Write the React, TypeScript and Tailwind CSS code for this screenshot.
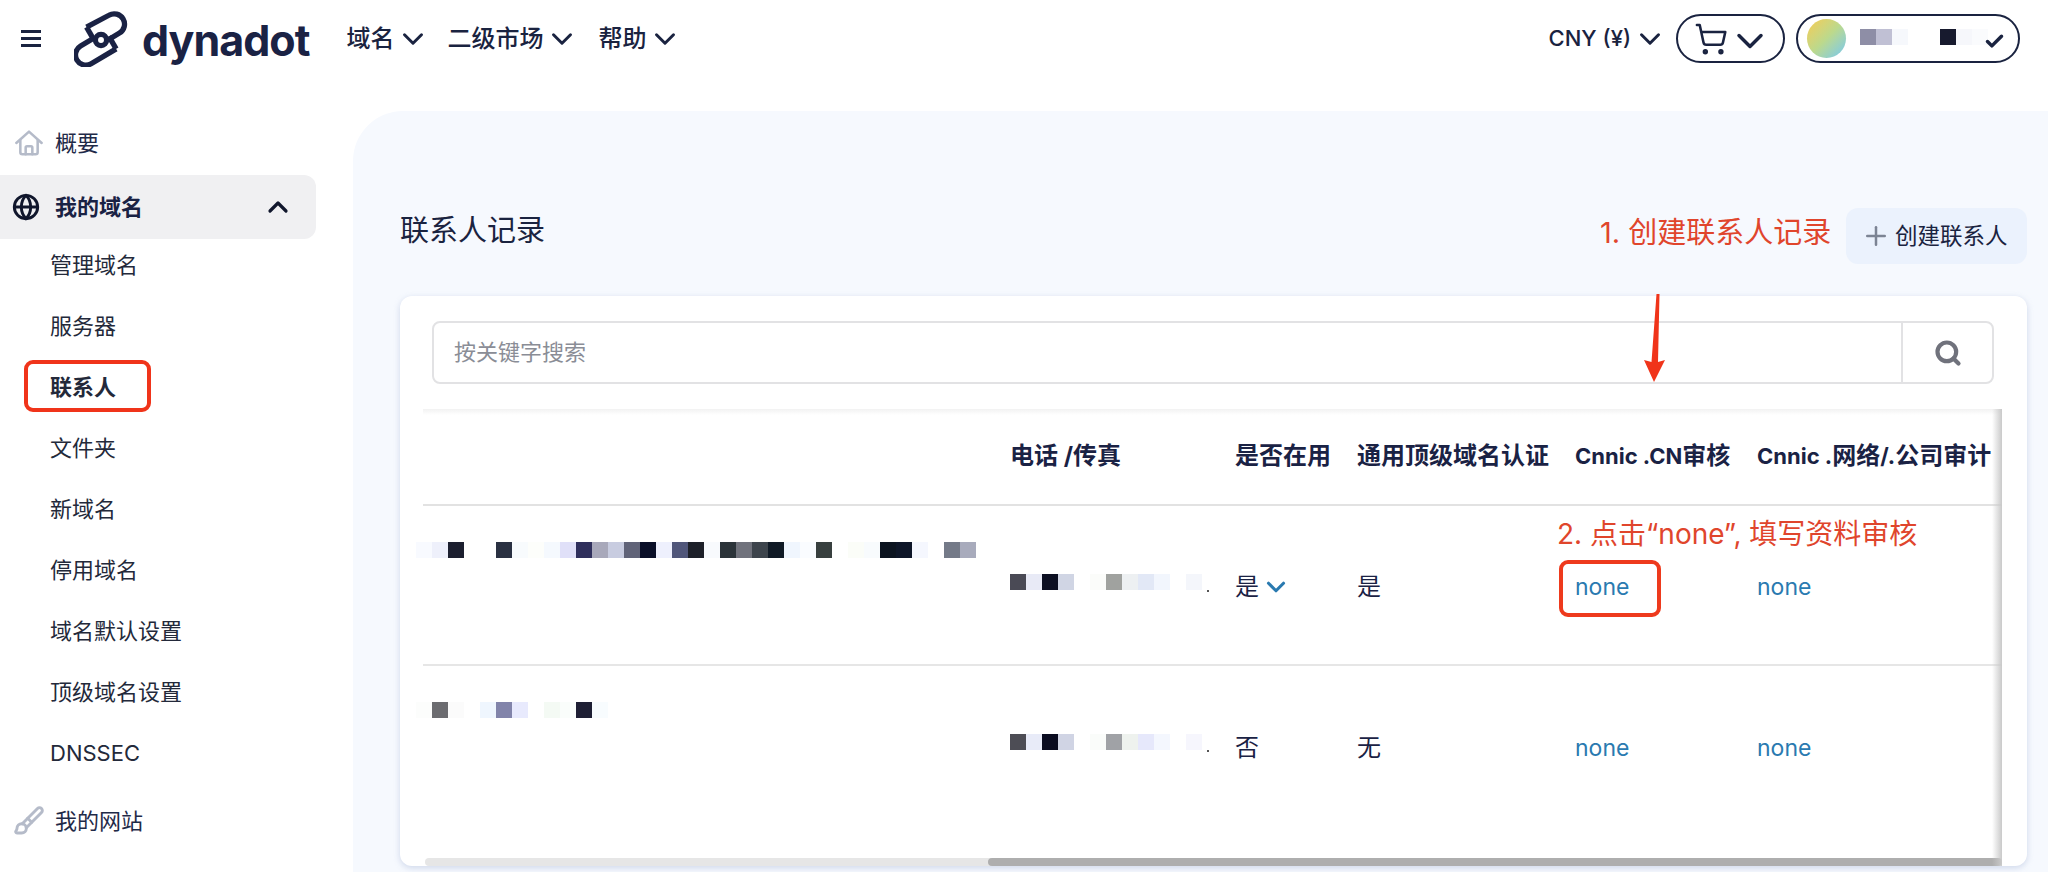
import { Brush, Check, ChevronDown, ChevronUp, Globe, Plus, Search, ShoppingCart } from "lucide-react";

const FONT = "font-['Inter','Noto_Sans_CJK_SC',sans-serif]";

const nameRow1 = [
  "#f8faff", "#eef0fb", "#1c1f2f", "#fff", "#fff", "#2a3142", "#f8fbfd", "#fdfefb", "#f5f9fe", "#e0e0f8",
  "#2f2f5c", "#a8a8ba", "#c8cce0", "#606378", "#0a0f28", "#eef0fd", "#50567a", "#1d2029", "#f8fafd", "#2b3339",
  "#70727c", "#3d444c", "#101a26", "#f0f6fe", "#fafcff", "#38403f", "#fff", "#fbfdf8", "#f8fbfd", "#0c1420",
  "#0e1628", "#f5f7fe", "#fff", "#747a88", "#a8abbc",
];
const nameRow2 = ["#fcfdfc", "#6c6c70", "#fbfbfb", "#fff", "#eff6fe", "#8284aa", "#e8eafd", "#fff", "#f4faf4", "#fafdfb", "#1e1f34", "#f8fcfe"];
const phoneRow1 = ["#4a4a55", "#e8eaf6", "#0c0f22", "#d0d5e4", "#fff", "#fbfcfa", "#a0a29f", "#edf0f2", "#e2e8f6", "#f2f6fd", "#fff", "#f4f6fb"];
const phoneRow2 = ["#4d4d55", "#e8ebf8", "#0a0c20", "#d0d4e4", "#fff", "#fafcfa", "#a0a2a6", "#eef2ee", "#e6e8fb", "#f4f7fe", "#fff", "#f6f6fd"];
const accountBits = ["#8e8ea6", "#c0c0d4", "#f6f8fc", "#fff", "#fff", "#171a2e", "#f6f7fb", "#fafbfd"];

const subItems = ["管理域名", "服务器", "联系人", "文件夹", "新域名", "停用域名", "域名默认设置", "顶级域名设置", "DNSSEC"];

const COLS = "grid grid-cols-[587px_225px_122px_218px_182px_245px]";

function Mosaic({ cells, className }: { cells: string[]; className?: string }) {
  return (
    <div className={`flex h-4 shrink-0 ${className ?? ""}`}>
      {cells.map((c, i) => (
        <span key={i} className="h-4 w-4 shrink-0" style={{ backgroundColor: c }} />
      ))}
    </div>
  );
}

function Logo() {
  return (
    <svg className="ml-[33px] h-[56px] w-[56px] shrink-0" viewBox="40 15 170 170" fill="none" stroke="#1a2244" strokeWidth="16" strokeLinejoin="round">
      <path d="M78 64L146 28A31 31 0 0 1 178 82L142 104" />
      <path d="M78 64L100 102" />
      <path d="M168 130L92 175A31 31 0 0 1 60 121L102 96" />
      <path d="M168 130L146 92" />
      <circle cx="122" cy="103" r="17" />
    </svg>
  );
}

function HomeIcon() {
  return (
    <svg className="h-[32px] w-[32px] shrink-0" viewBox="0 0 24 24" fill="none" stroke="#b5bbc9" strokeWidth="1.9" strokeLinecap="round" strokeLinejoin="round">
      <path d="M2.5 12L12 3.5L21.5 12" />
      <path d="M5.5 10v9a1.5 1.5 0 0 0 1.5 1.5h10a1.5 1.5 0 0 0 1.5-1.5v-9" />
      <path d="M9.5 20.5v-5a1 1 0 0 1 1-1h3a1 1 0 0 1 1 1v5" />
    </svg>
  );
}

function NavLink({ label, className }: { label: string; className?: string }) {
  return (
    <div className={`flex items-center gap-[2px] text-[24px] font-medium text-[#1a2340] ${className ?? ""}`}>
      <span>{label}</span>
      <ChevronDown className="h-[34px] w-[34px]" strokeWidth={2.1} />
    </div>
  );
}

function Header() {
  return (
    <header className="flex h-[111px] shrink-0 items-start pt-[11px]">
      <div className="flex w-[20px] ml-[21px] mt-[19px] flex-col gap-[4px]">
        <span className="h-[3px] w-[20px] bg-[#1a2340]" />
        <span className="h-[3px] w-[20px] bg-[#1a2340]" />
        <span className="h-[3px] w-[20px] bg-[#1a2340]" />
      </div>
      <Logo />
      <span className="ml-[12px] mt-[4px] text-[43px] leading-[50px] font-bold tracking-[-1px] text-[#1a2244]">dynadot</span>
      <div className="ml-[37px] mt-[10px] flex items-center">
        <NavLink label="域名" />
        <NavLink label="二级市场" className="ml-[17px]" />
        <NavLink label="帮助" className="ml-[19px]" />
      </div>
      <div className="ml-auto mr-[28px] mt-[3px] flex items-center">
        <div className="flex items-center gap-[2px] text-[22px] font-medium text-[#1a2340]">
          <span>CNY (¥)</span>
          <ChevronDown className="h-[34px] w-[34px]" strokeWidth={2.1} />
        </div>
        <div className="ml-[9px] flex h-[49px] w-[109px] items-center rounded-full border-2 border-[#1a2340] pl-[16px]">
          <ShoppingCart className="h-[34px] w-[34px] shrink-0 text-[#1a2340]" strokeWidth={1.8} />
          <ChevronDown className="mt-[4px] h-[44px] w-[44px] shrink-0 text-[#1a2340]" strokeWidth={1.9} />
        </div>
        <div className="ml-[11px] flex h-[49px] w-[224px] items-center rounded-full border-2 border-[#1a2340] pl-[9px]">
          <span className="h-[39px] w-[39px] shrink-0 rounded-full bg-gradient-to-br from-[#f5cb4e] via-[#bcd98c] to-[#74c6ee]" />
          <Mosaic cells={accountBits} className="ml-[14px] -mt-[3px]" />
          <Check className="ml-[-4px] mt-[6px] h-[21px] w-[21px] shrink-0 text-[#1a2340]" strokeWidth={4} />
        </div>
      </div>
    </header>
  );
}

function Sidebar() {
  return (
    <aside className="w-[353px] shrink-0">
      <div className="flex h-[64px] items-center gap-[10px] pl-[13px] text-[22px] text-[#1f2a48]">
        <HomeIcon />
        <span>概要</span>
      </div>
      <div className="relative z-10 flex h-[64px] w-[316px] items-center rounded-r-xl bg-[#f0f0f2] pl-[12px] text-[22px] font-bold text-[#1a2244]">
        <Globe className="h-[28px] w-[28px] text-[#10162c]" strokeWidth={2.5} />
        <span className="ml-[15px]">我的域名</span>
        <ChevronUp className="ml-auto mr-[22px] h-[32px] w-[32px] text-[#10162c]" strokeWidth={2.4} />
      </div>
      <ul className="-mt-[4px]">
        {subItems.map((s) => (
          <li key={s} className={`relative z-20 flex h-[61px] items-center pl-[50px] text-[22px] text-[#23293a] ${s === "联系人" ? "font-bold" : ""}`}>
            {s}
          </li>
        ))}
      </ul>
      <div className="flex h-[74px] items-center gap-[10px] pl-[13px] text-[22px] text-[#1f2a48]">
        <Brush className="h-[32px] w-[32px] text-[#b5bbc9]" strokeWidth={2.2} />
        <span>我的网站</span>
      </div>
    </aside>
  );
}

function NoneLink() {
  return <span className="text-[23px] leading-[36px] text-[#2a7ab0]">none</span>;
}

function ContactTable() {
  return (
    <div className="relative ml-[23px] mt-[25px] flex w-[1579px] flex-1 flex-col">
      <div className="h-[6px] bg-gradient-to-b from-[#f2f2f2] to-white" />
      <div className={`${COLS} h-[91px] items-start border-b-2 border-[#e2e2e2] pt-[23px] text-[24px] leading-[36px] font-bold text-[#1a2244]`}>
        <span />
        <span>电话 /传真</span>
        <span>是否在用</span>
        <span className="whitespace-nowrap">通用顶级域名认证</span>
        <span className="whitespace-nowrap"><span className="text-[22px]">Cnnic .CN</span>审核</span>
        <span className="whitespace-nowrap"><span className="text-[22px]">Cnnic .</span>网络<span className="text-[22px]">/.</span>公司审计</span>
      </div>
      <div className={`${COLS} h-[160px] border-b-2 border-[#e6e6e6] text-[24px] leading-[36px] text-[#1a2244]`}>
        <Mosaic cells={nameRow1} className="ml-[-7px] mt-[36px]" />
        <div className="flex pt-[68px]">
          <Mosaic cells={phoneRow1} />
          <span className="ml-[5px] mt-[16px] h-[2px] w-[2px] bg-[#555]" />
        </div>
        <div className="flex h-[99px] items-center self-start pt-[63px]">
          <span>是</span>
          <ChevronDown className="ml-[2px] h-[30px] w-[30px] text-[#2a7ab0]" strokeWidth={2.5} />
        </div>
        <span className="pt-[63px]">是</span>
        <span className="pt-[63px]"><NoneLink /></span>
        <span className="pt-[63px]"><NoneLink /></span>
      </div>
      <div className={`${COLS} flex-1 text-[24px] leading-[36px] text-[#1a2244]`}>
        <Mosaic cells={nameRow2} className="ml-[-7px] mt-[36px]" />
        <div className="flex pt-[68px]">
          <Mosaic cells={phoneRow2} />
          <span className="ml-[5px] mt-[16px] h-[2px] w-[2px] bg-[#555]" />
        </div>
        <span className="pt-[64px]">否</span>
        <span className="pt-[64px]">无</span>
        <span className="pt-[64px]"><NoneLink /></span>
        <span className="pt-[64px]"><NoneLink /></span>
      </div>
      <div className="ml-[2px] flex h-[8px] shrink-0 rounded-full bg-[#e6e6e6]">
        <div className="ml-[563px] flex-1 rounded-full bg-[#aeaeae]" />
      </div>
      <div className="pointer-events-none absolute bottom-0 right-0 top-0 w-[10px] bg-gradient-to-r from-transparent to-[#c9c9c9]" />
    </div>
  );
}

export default function App() {
  return (
    <div className={`relative flex h-[872px] w-[2048px] flex-col overflow-hidden bg-white ${FONT}`}>
      <Header />
      <div className="flex min-h-0 flex-1">
        <Sidebar />
        <main className="flex flex-1 flex-col rounded-tl-[50px] bg-[#f6f9fe] pl-[47px] pr-[21px] pt-[97px]">
          <div className="flex h-[56px] items-center justify-between">
            <h1 className="-mt-[10px] text-[29px] font-normal text-[#1a2340]">联系人记录</h1>
            <button className="flex h-[56px] w-[181px] items-center rounded-xl bg-[#ebf2fd] pl-[15px] text-[22.5px] text-[#1a2340]">
              <Plus className="h-[30px] w-[30px] text-[#7c8494]" strokeWidth={2} />
              <span className="ml-[4px]">创建联系人</span>
            </button>
          </div>
          <div className="mt-[32px] flex h-[570px] flex-col overflow-hidden rounded-xl bg-white pt-[25px] shadow-[0_2px_6px_rgba(160,175,210,0.45)]">
            <div className="ml-[32px] flex h-[63px] w-[1562px] shrink-0 items-center rounded-lg border-2 border-[#e2e2e4]">
              <span className="flex-1 pl-[20px] text-[22px] text-[#8a8d96]">按关键字搜索</span>
              <span className="flex h-full w-[91px] items-center justify-center border-l-2 border-[#e2e2e4]">
                <Search className="h-[28px] w-[28px] text-[#70727c]" strokeWidth={3.6} />
              </span>
            </div>
            <ContactTable />
          </div>
        </main>
      </div>

      {/* annotations drawn over the screenshot */}
      <span className="absolute left-[24px] top-[360px] h-[52px] w-[127px] rounded-[9px] border-4 border-[#f0341a]" />
      <span className="absolute left-[1600px] top-[213px] text-[29px] leading-[40px] whitespace-nowrap text-[#e0452c]">1. 创建联系人记录</span>
      <svg className="absolute left-[1640px] top-[290px] h-[96px] w-[30px]" viewBox="0 0 30 96">
        <path d="M16.5 4L19.5 4L18 72L25 70L14 92L4 70L11.5 72Z" fill="#f0341a" />
      </svg>
      <span className="absolute left-[1557px] top-[514px] text-[28px] leading-[40px] whitespace-nowrap text-[#e0452c]">2. 点击“none”, 填写资料审核</span>
      <span className="absolute left-[1559px] top-[560px] h-[57px] w-[102px] rounded-[9px] border-4 border-[#ee3a1d]" />
    </div>
  );
}
